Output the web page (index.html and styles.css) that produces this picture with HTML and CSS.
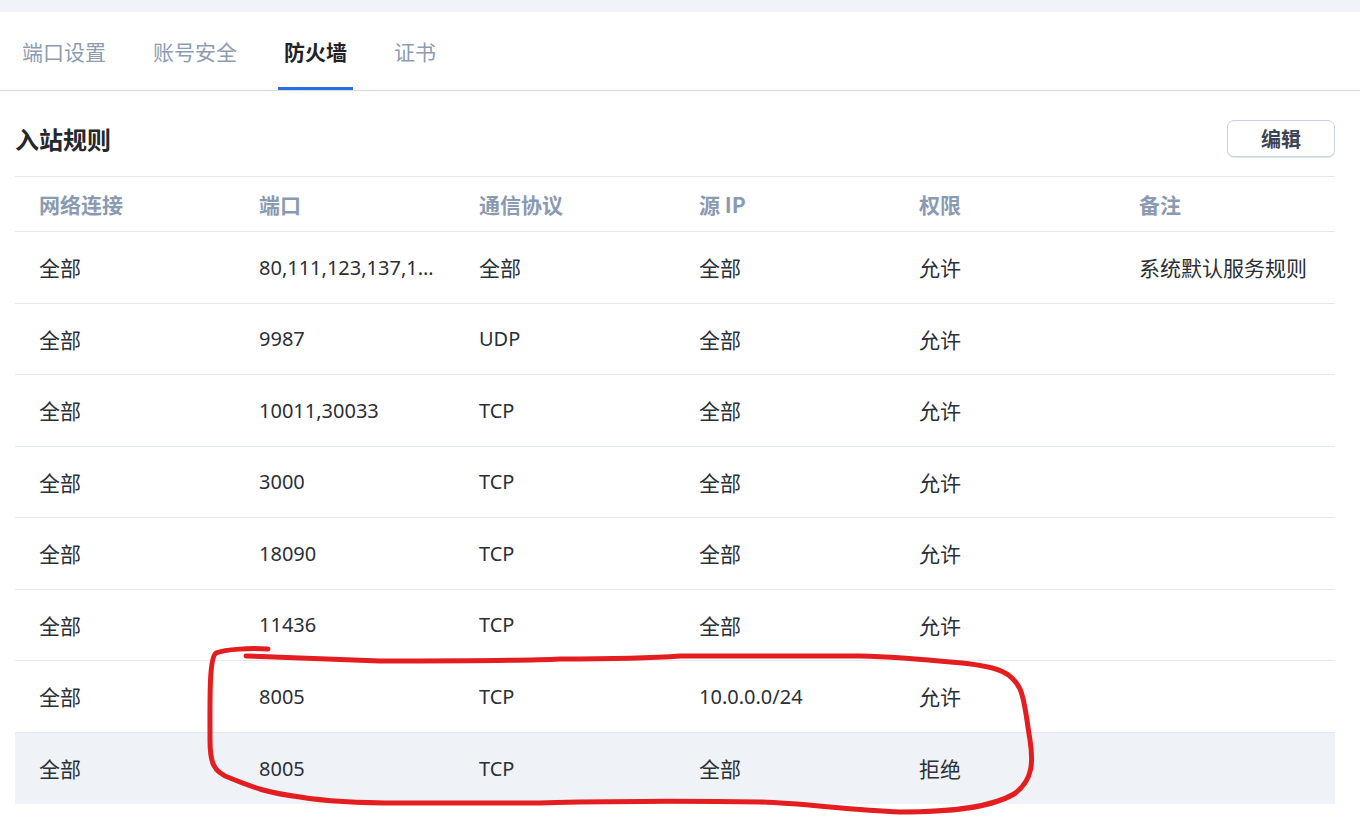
FILE: index.html
```html
<!DOCTYPE html>
<html lang="zh">
<head>
<meta charset="utf-8">
<title>防火墙</title>
<link rel="stylesheet" href="styles.css">
</head>
<body>
<div class="topstrip"></div>
<main class="page">
  <nav class="tabs">
    <div class="tab">端口设置</div>
    <div class="tab">账号安全</div>
    <div class="tab active">防火墙</div>
    <div class="tab">证书</div>
  </nav>
  <section class="content">
    <div class="section-head">
      <h2 class="title">入站规则</h2>
      <button class="btn">编辑</button>
    </div>
    <div class="table">
      <div class="row head">
        <div class="cell">网络连接</div><div class="cell">端口</div><div class="cell">通信协议</div><div class="cell">源 IP</div><div class="cell">权限</div><div class="cell">备注</div>
      </div>
      <div class="row">
        <div class="cell">全部</div><div class="cell lat">80,111,123,137,138,139,161,162,445</div><div class="cell">全部</div><div class="cell">全部</div><div class="cell">允许</div><div class="cell">系统默认服务规则</div>
      </div>
      <div class="row">
        <div class="cell">全部</div><div class="cell lat">9987</div><div class="cell lat">UDP</div><div class="cell">全部</div><div class="cell">允许</div><div class="cell"></div>
      </div>
      <div class="row">
        <div class="cell">全部</div><div class="cell lat">10011,30033</div><div class="cell lat">TCP</div><div class="cell">全部</div><div class="cell">允许</div><div class="cell"></div>
      </div>
      <div class="row">
        <div class="cell">全部</div><div class="cell lat">3000</div><div class="cell lat">TCP</div><div class="cell">全部</div><div class="cell">允许</div><div class="cell"></div>
      </div>
      <div class="row">
        <div class="cell">全部</div><div class="cell lat">18090</div><div class="cell lat">TCP</div><div class="cell">全部</div><div class="cell">允许</div><div class="cell"></div>
      </div>
      <div class="row">
        <div class="cell">全部</div><div class="cell lat">11436</div><div class="cell lat">TCP</div><div class="cell">全部</div><div class="cell">允许</div><div class="cell"></div>
      </div>
      <div class="row">
        <div class="cell">全部</div><div class="cell lat">8005</div><div class="cell lat">TCP</div><div class="cell lat">10.0.0.0/24</div><div class="cell">允许</div><div class="cell"></div>
      </div>
      <div class="row hover">
        <div class="cell">全部</div><div class="cell lat">8005</div><div class="cell lat">TCP</div><div class="cell">全部</div><div class="cell">拒绝</div><div class="cell"></div>
      </div>
    </div>
  </section>
</main>
<svg class="annotation" width="1360" height="818" viewBox="0 0 1360 818" xmlns="http://www.w3.org/2000/svg">
  <path d="M268,649 C250,648 226,649 216,653 C209,658 210,700 210,740 C210,762 213,772 230,778 C250,786 262,792 300,797 C330,802 360,803 400,803 L540,803 C580,801 700,801 760,802 C800,803 850,810 900,812 C950,812 990,808 1014,794 C1034,780 1033,760 1030,740 C1026,716 1025,700 1020,689 C1012,673 1000,667 962,663 C930,660 900,657 860,656 L680,656 C640,659 600,659 560,659 C520,661 450,661 380,661 L246,656" fill="none" stroke="#e41e20" stroke-width="5" stroke-linecap="round" stroke-linejoin="round"/>
</svg>
</body>
</html>
```
FILE: styles.css
```css
* { box-sizing: border-box; }
html, body { margin: 0; padding: 0; }
body {
  background: #ffffff;
  font-family: "Noto Sans", "Noto Sans CJK SC", sans-serif;
  color: #2b2f36;
  width: 1360px;
  height: 818px;
  overflow: hidden;
  position: relative;
}
.topstrip { height: 12px; background: #f0f3f8; }
.page { background: #ffffff; }
.tabs {
  display: flex;
  gap: 35px;
  padding-left: 16px;
  height: 79px;
  border-bottom: 1px solid #d3dbe6;
}
.tab {
  display: flex;
  align-items: center;
  padding: 3px 6px 0;
  font-family: "Noto Sans CJK SC", sans-serif;
  font-size: 21px;
  color: #8e9cb1;
  border-bottom: 3px solid transparent;
}
.tab.active {
  color: #1f2329;
  font-weight: 700;
  border-bottom-color: #2a6fdb;
}
.content { padding: 0 25px 0 15px; }
.section-head {
  display: flex;
  justify-content: space-between;
  align-items: center;
  padding: 29px 0 19px;
}
.title {
  margin: 0;
  font-family: "Noto Sans CJK SC", sans-serif;
  font-size: 24px;
  font-weight: 700;
  color: #23272e;
}
.btn {
  width: 108px;
  height: 37px;
  border: 1px solid #c9d3e0;
  border-radius: 7px;
  background: #ffffff;
  font-family: "Noto Sans CJK SC", sans-serif;
  font-size: 20px;
  font-weight: 700;
  color: #3b4457;
  box-shadow: 0 1px 0 #dfe5ee;
  padding: 0;
}
.table { border-top: 1px solid #e4e9f0; }
.row {
  display: grid;
  grid-template-columns: repeat(6, 220px);
  height: 71.5px;
  border-bottom: 1px solid #e4e9f0;
  align-items: center;
}
.row.head {
  height: 55px;
  font-weight: 700;
  color: #8a9ab1;
}
.row.hover { background: #eff3f8; border-bottom: none; }
.cell {
  padding: 0 16px 0 24px;
  font-size: 21px;
  white-space: nowrap;
  overflow: hidden;
  text-overflow: ellipsis;
}
.cell.lat { font-size: 20px; }
.row.head .cell { font-family: "Noto Sans CJK SC", sans-serif; }
.annotation {
  position: absolute;
  left: 0;
  top: 0;
  pointer-events: none;
}
```
